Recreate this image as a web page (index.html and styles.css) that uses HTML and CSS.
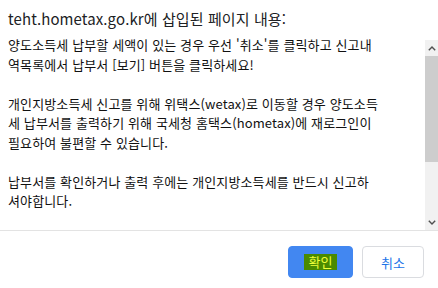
FILE: index.html
```html
<!DOCTYPE html>
<html lang="ko">
<head>
<meta charset="utf-8">
<link rel="stylesheet" href="styles.css">
</head>
<body>
<div class="dialog">
  <div class="title">teht.hometax.go.kr에 삽입된 페이지 내용:</div>
  <div class="content">
    <div class="text">
      <p class="para">양도소득세 납부할 세액이 있는 경우 우선 '취소'를 클릭하고 신고내<br>역목록에서 납부서 [보기] 버튼을 클릭하세요!</p>
      <p class="para">개인지방소득세 신고를 위해 위택스(wetax)로 이동할 경우 양도소득<br>세 납부서를 출력하기 위해 국세청 홈택스(hometax)에 재로그인이<br>필요하여 불편할 수 있습니다.</p>
      <p class="para">납부서를 확인하거나 출력 후에는 개인지방소득세를 반드시 신고하<br>셔야합니다.</p>
    </div>
    <div class="scrollbar">
      <div class="arrow">
        <svg width="8" height="5" viewBox="0 0 8 5"><path d="M0.8 4.3 L4 1.1 L7.2 4.3" fill="none" stroke="#505050" stroke-width="1.4"/></svg>
      </div>
      <div class="thumb"></div>
      <div class="track"></div>
      <div class="arrow">
        <svg width="8" height="5" viewBox="0 0 8 5"><path d="M0.8 0.7 L4 3.9 L7.2 0.7" fill="none" stroke="#505050" stroke-width="1.4"/></svg>
      </div>
    </div>
  </div>
  <div class="footer">
    <button class="btn btn-primary"><span class="hl">확인</span></button>
    <button class="btn btn-secondary">취소</button>
  </div>
</div>
</body>
</html>
```
FILE: styles.css
```css
html, body {
  margin: 0;
  padding: 0;
  background: #ffffff;
}
body {
  width: 438px;
  height: 288px;
  overflow: hidden;
  font-family: "Noto Sans CJK KR", "Noto Sans", sans-serif;
}
.dialog {
  display: flex;
  flex-direction: column;
  width: 438px;
  height: 288px;
}
.title {
  height: 30px;
  box-sizing: border-box;
  padding: 9px 8px 0;
  font-size: 15px;
  line-height: 20px;
  letter-spacing: 0.1px;
  color: #202124;
  white-space: nowrap;
}
.content {
  display: flex;
  height: 201px;
  box-sizing: border-box;
  border-bottom: 1px solid #e3e3e3;
}
.text {
  flex: 1;
  padding: 5px 8px 0;
  font-size: 13px;
  line-height: 19.5px;
  letter-spacing: 0.12px;
  color: #111111;
  white-space: nowrap;
  overflow: hidden;
}
.para {
  margin: 0 0 19.5px;
}
.scrollbar {
  width: 13px;
  padding-top: 10px;
  display: flex;
  flex-direction: column;
}
.arrow {
  height: 16px;
  background: #f1f1f1;
  display: flex;
  align-items: center;
  justify-content: center;
}
.thumb {
  height: 106px;
  background: #cdcdcd;
}
.track {
  flex: 1;
  background: #f1f1f1;
}
.footer {
  flex: 1;
  display: flex;
  justify-content: flex-end;
  align-items: flex-start;
  gap: 9px;
  padding: 15px 14px 0 0;
}
.btn {
  height: 32px;
  box-sizing: border-box;
  border-radius: 4px;
  font-family: "Noto Sans CJK KR", "Noto Sans", sans-serif;
  font-size: 13px;
  padding: 0;
  display: flex;
  align-items: center;
  justify-content: center;
}
.btn-primary {
  width: 65px;
  background: #4287f1;
  border: 1px solid #4287f1;
}
.hl {
  background: #4a8a00;
  color: #eeff3a;
  padding: 0 5px;
  line-height: 16px;
}
.btn-secondary {
  width: 62px;
  background: #ffffff;
  border: 1px solid #dadce0;
  color: #1a73e8;
}
```
